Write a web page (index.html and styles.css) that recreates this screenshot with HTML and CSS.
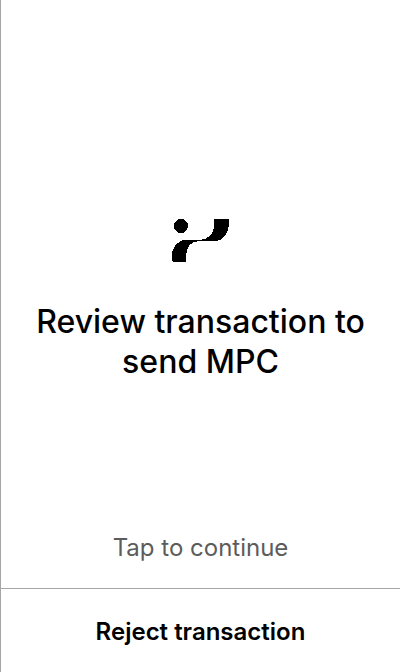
FILE: index.html
```html
<!DOCTYPE html>
<html lang="en">
<head>
<meta charset="utf-8">
<meta name="viewport" content="width=device-width, initial-scale=1">
<title>Review transaction</title>
<link rel="stylesheet" href="styles.css">
</head>
<body>
<div class="screen">
  <main class="review">
    <div class="summary">
      <svg class="logo" viewBox="0 0 64 64" shape-rendering="crispEdges" aria-hidden="true">
        <circle cx="12" cy="18" r="7"/>
        <path d="M4 54L3 53V47C3 40 7 36 11.500 33C13 32.200 14 32 16 32H30C39 32 45 26 45 18V11H59L60 12V15C60 24 55 33 47 33H30C21 33 17 40 17 49V54Z"/>
      </svg>
      <h1 class="title">Review transaction to send MPC</h1>
    </div>
    <button class="hint" type="button">Tap to continue</button>
  </main>
  <button class="reject" type="button">Reject transaction</button>
</div>
</body>
</html>
```

FILE: styles.css
```css
* {
  box-sizing: border-box;
}

body {
  margin: 0;
  background: #fff;
  color: #000;
  font-family: Inter, "Liberation Sans", sans-serif;
}

button {
  margin: 0;
  border: 0;
  background: none;
  font-family: inherit;
  cursor: pointer;
}

.screen {
  display: flex;
  flex-direction: column;
  min-height: 100vh;
  border-left: 1px solid #a6a6a6;
}

.review {
  flex: 1;
  display: grid;
  grid-template-rows: 1fr auto 1fr;
  padding: 2px 24px 0;
}

.summary {
  grid-row: 2;
  display: flex;
  flex-direction: column;
  align-items: center;
  gap: 30px;
}

.logo {
  width: 64px;
  height: 64px;
}

.title {
  margin: 0;
  font-size: 32px;
  font-weight: 500;
  line-height: 40px;
  text-align: center;
}

.hint {
  grid-row: 3;
  place-self: end center;
  padding: 0 0 24px;
  color: #5c5c5c;
  font-size: 24px;
  font-weight: 400;
  line-height: 32px;
}

.reject {
  padding: 27px 24px 24px;
  border-top: 1px solid #a6a6a6;
  color: #000;
  font-size: 24px;
  font-weight: 600;
  line-height: 32px;
}
```
